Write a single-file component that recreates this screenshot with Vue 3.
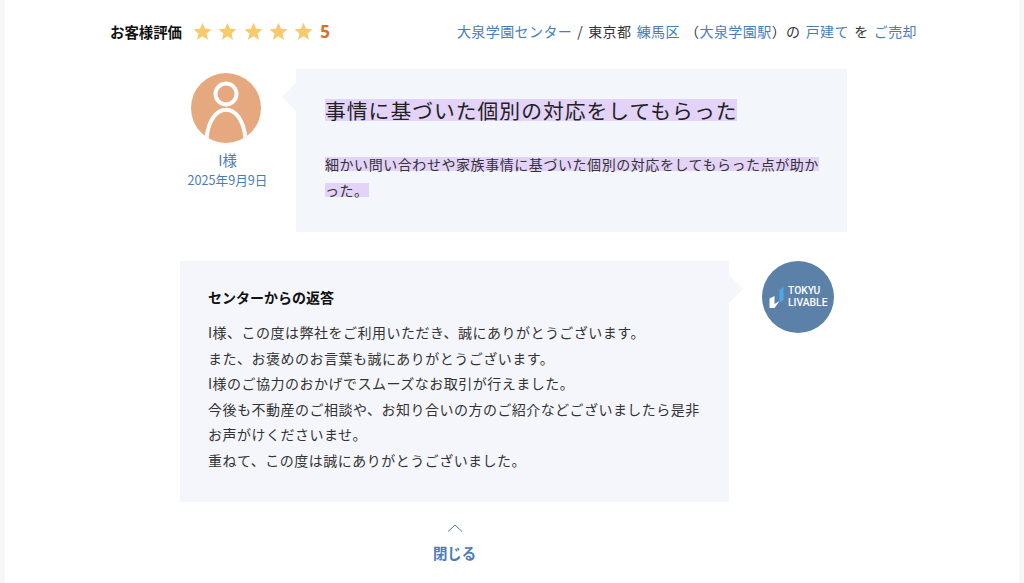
<template>
  <div class="page">
    <main class="sheet">
      <!-- rating row -->
      <header class="head">
        <div class="rating">
          <span class="rating-label">お客様評価</span>
          <span class="stars">
            <svg v-for="n in 5" :key="n" class="star" viewBox="0 0 20 20">
              <path d="M10 .8l2.7 6.2 6.7.6-5.1 4.4 1.5 6.6L10 15.1l-5.8 3.5 1.5-6.6L.6 7.6l6.7-.6z" />
            </svg>
          </span>
          <span class="score">5</span>
        </div>
        <div class="crumbs">
          <a>大泉学園センター</a><span class="slash">/</span><span>東京都</span><a class="gap">練馬区</a><span class="station">（<a>大泉学園駅</a>）</span><span>の</span><a class="gap">戸建て</a><span class="gap">を</span><a class="gap">ご売却</a>
        </div>
      </header>

      <!-- customer review -->
      <section class="review">
        <div class="customer">
          <svg class="avatar" viewBox="0 0 70 70">
            <defs>
              <clipPath id="avatar-clip"><circle cx="35" cy="35" r="35" /></clipPath>
            </defs>
            <circle cx="35" cy="35" r="35" fill="#e6a97f" />
            <g clip-path="url(#avatar-clip)" fill="none" stroke="#fff" stroke-width="4">
              <circle cx="35" cy="21" r="10.500" />
              <path d="M15.500 66C17 48 25 36.700 35 36.700s18 11.300 19.500 29.300" />
            </g>
          </svg>
          <div class="name">I様</div>
          <div class="date">2025年9月9日</div>
        </div>
        <div class="bubble bubble-left">
          <h2 class="title"><span class="mark">事情に基づいた個別の対応をしてもらった</span></h2>
          <p class="comment"><span class="mark">細かい問い合わせや家族事情に基づいた個別の対応をしてもらった点が助かった。</span></p>
        </div>
      </section>

      <!-- reply from the center -->
      <section class="reply">
        <div class="bubble bubble-right">
          <h3 class="reply-title">センターからの返答</h3>
          <p class="reply-text">
            I様、この度は弊社をご利用いただき、誠にありがとうございます。<br />
            また、お褒めのお言葉も誠にありがとうございます。<br />
            I様のご協力のおかげでスムーズなお取引が行えました。<br />
            今後も不動産のご相談や、お知り合いの方のご紹介などございましたら是非お声がけくださいませ。<br />
            重ねて、この度は誠にありがとうございました。
          </p>
        </div>
        <div class="logo">
          <svg class="logo-mark" viewBox="0 0 15 21">
            <path d="M10.500 3L14.500 0v13l-4 2.500z" fill="#4fa9e6" />
            <path d="M0.500 11.500L5.500 9v8l5-3-5 7h-5z" fill="#fff" />
          </svg>
          <div class="logo-text">TOKYU<br />LIVABLE</div>
        </div>
      </section>

      <div class="close">
        <svg class="chevron" viewBox="0 0 16 8">
          <path d="M1 7.500L8 1l7 6.500" />
        </svg>
        <span>閉じる</span>
      </div>
    </main>
  </div>
</template>

<script setup>
</script>

<style>
html,
body {
  margin: 0;
  background: #f7f7f7;
}
</style>

<style scoped>
.page {
  height: 583px;
  padding: 0 5px;
  overflow: hidden;
  font-family: "Noto Sans CJK JP", "Liberation Sans", sans-serif;
  color: #222;
}

.sheet {
  height: 100%;
  background: #fff;
}

a {
  color: #4a7cbb;
}

/* Rating row */
.head {
  display: flex;
  justify-content: space-between;
  align-items: center;
  height: 62px;
  padding: 0 102px 0 105px;
}

.rating {
  display: flex;
  align-items: center;
}

.rating-label {
  font-size: 14.400px;
  font-weight: 700;
  color: #111;
}

.stars {
  display: flex;
  gap: 6.300px;
  margin-left: 11px;
}

.star {
  width: 19px;
  height: 19px;
  fill: #f8ca6c;
}

.score {
  margin-left: 7px;
  font-family: "Noto Sans", sans-serif;
  font-size: 17px;
  font-weight: 700;
  color: #d9712b;
}

.crumbs {
  display: flex;
  align-items: center;
  font-size: 14px;
  letter-spacing: 0.03em;
  color: #333;
}

.slash {
  margin: 0 5px;
}

.gap {
  margin-left: 5.200px;
}

.station {
  margin: 0 0 0 5.200px;
}

/* Review */
.review {
  display: flex;
  margin: 7px 172px 0 175px;
}

.customer {
  width: 92px;
  padding-top: 4px;
  margin-right: 24px;
  text-align: center;
  flex-shrink: 0;
}

.avatar {
  display: block;
  width: 70px;
  height: 70px;
  margin: 0 auto 6px;
}

.name {
  padding-left: 3px;
  font-size: 14.400px;
  line-height: 22px;
  color: #4a7cbb;
}

.date {
  padding-left: 3px;
  font-size: 12.650px;
  line-height: 18px;
  color: #4a7cbb;
  white-space: nowrap;
}

.bubble {
  position: relative;
  background: #f3f6fb;
  box-sizing: border-box;
}

.bubble-left {
  width: 551px;
  height: 163px;
  padding: 29px 28px 0 29px;
}

.bubble-left::before {
  content: "";
  position: absolute;
  left: -14px;
  top: 14px;
  border-style: solid;
  border-width: 14px 14px 14px 0;
  border-color: transparent #f3f6fb transparent transparent;
}

.title {
  margin: 0 0 29px;
  font-size: 20.800px;
  font-weight: 400;
  line-height: 24px;
  letter-spacing: 1px;
  color: #222;
}

.comment {
  margin: 0;
  font-size: 14px;
  line-height: 26px;
  letter-spacing: 0.04em;
  color: #333;
}

/* highlight only as tall as the glyphs, not the whole CJK content box */
.mark {
  background: linear-gradient(transparent 13%, #e3d3f8 13%, #e3d3f8 87%, transparent 87%);
}

/* Reply */
.reply {
  display: flex;
  margin: 29px 0 0 175px;
}

.bubble-right {
  width: 549px;
  height: 241px;
  padding: 26px 28px 0;
  background: #f5f6fb;
}

.bubble-right::after {
  content: "";
  position: absolute;
  right: -14px;
  top: 14px;
  border-style: solid;
  border-width: 14px 0 14px 14px;
  border-color: transparent transparent transparent #f5f6fb;
}

.reply-title {
  margin: 0 0 13px;
  font-size: 14px;
  font-weight: 700;
  line-height: 20px;
  color: #111;
}

.reply-text {
  margin: 0;
  font-size: 14px;
  line-height: 25.500px;
  letter-spacing: 0.035em;
  color: #333;
}

.logo {
  display: flex;
  align-items: center;
  justify-content: center;
  gap: 4.500px;
  width: 72px;
  height: 72px;
  margin-left: 33px;
  border-radius: 50%;
  background: #5b81a8;
}

.logo-mark {
  width: 15px;
  height: 21px;
}

.logo-text {
  font-family: Roboto, "Liberation Sans", sans-serif;
  font-size: 10.300px;
  font-weight: 500;
  line-height: 12px;
  color: #fff;
}

/* Close */
.close {
  display: flex;
  flex-direction: column;
  align-items: center;
  width: 549px;
  margin: 22px 0 0 175px;
  font-size: 14.400px;
  font-weight: 700;
  line-height: 20px;
  color: #4a7cbb;
}

.chevron {
  width: 16px;
  height: 8px;
  margin-bottom: 11px;
  fill: none;
  stroke: #4a7cbb;
  stroke-width: 1;
}
</style>
